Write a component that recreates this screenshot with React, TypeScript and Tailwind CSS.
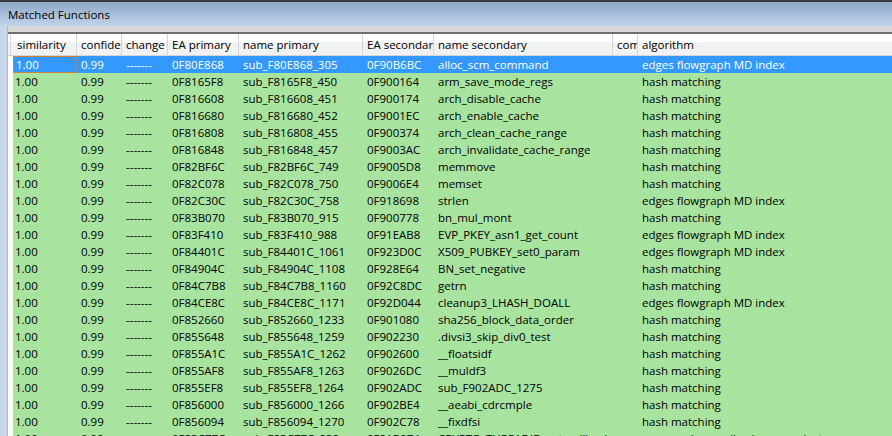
import React from 'react';

type Row = [string, string, string, string, string];

const rows: Row[] = [
  ['0F80E868', 'sub_F80E868_305', '0F90B6BC', 'alloc_scm_command', 'edges flowgraph MD index'],
  ['0F8165F8', 'sub_F8165F8_450', '0F900164', 'arm_save_mode_regs', 'hash matching'],
  ['0F816608', 'sub_F816608_451', '0F900174', 'arch_disable_cache', 'hash matching'],
  ['0F816680', 'sub_F816680_452', '0F9001EC', 'arch_enable_cache', 'hash matching'],
  ['0F816808', 'sub_F816808_455', '0F900374', 'arch_clean_cache_range', 'hash matching'],
  ['0F816848', 'sub_F816848_457', '0F9003AC', 'arch_invalidate_cache_range', 'hash matching'],
  ['0F82BF6C', 'sub_F82BF6C_749', '0F9005D8', 'memmove', 'hash matching'],
  ['0F82C078', 'sub_F82C078_750', '0F9006E4', 'memset', 'hash matching'],
  ['0F82C30C', 'sub_F82C30C_758', '0F918698', 'strlen', 'edges flowgraph MD index'],
  ['0F83B070', 'sub_F83B070_915', '0F900778', 'bn_mul_mont', 'hash matching'],
  ['0F83F410', 'sub_F83F410_988', '0F91EAB8', 'EVP_PKEY_asn1_get_count', 'edges flowgraph MD index'],
  ['0F84401C', 'sub_F84401C_1061', '0F923D0C', 'X509_PUBKEY_set0_param', 'edges flowgraph MD index'],
  ['0F84904C', 'sub_F84904C_1108', '0F928E64', 'BN_set_negative', 'hash matching'],
  ['0F84C7B8', 'sub_F84C7B8_1160', '0F92C8DC', 'getrn', 'hash matching'],
  ['0F84CE8C', 'sub_F84CE8C_1171', '0F92D044', 'cleanup3_LHASH_DOALL', 'edges flowgraph MD index'],
  ['0F852660', 'sub_F852660_1233', '0F901080', 'sha256_block_data_order', 'hash matching'],
  ['0F855648', 'sub_F855648_1259', '0F902230', '.divsi3_skip_div0_test', 'hash matching'],
  ['0F855A1C', 'sub_F855A1C_1262', '0F902600', '__floatsidf', 'hash matching'],
  ['0F855AF8', 'sub_F855AF8_1263', '0F9026DC', '__muldf3', 'hash matching'],
  ['0F855EF8', 'sub_F855EF8_1264', '0F902ADC', 'sub_F902ADC_1275', 'hash matching'],
  ['0F856000', 'sub_F856000_1266', '0F902BE4', '__aeabi_cdrcmple', 'hash matching'],
  ['0F856094', 'sub_F856094_1270', '0F902C78', '__fixdfsi', 'hash matching'],
  ['0F83C77C', 'sub_F83C77C_838', '0F91B074', 'CRYPTO_THREADID_set_callback', 'mnemonics small-primes-product'],
];

const headers = [
  { label: 'similarity', w: 'w-[66px]' },
  { label: 'confidence', w: 'w-[45px]' },
  { label: 'change', w: 'w-[46px]' },
  { label: 'EA primary', w: 'w-[71px]' },
  { label: 'name primary', w: 'w-[124px]' },
  { label: 'EA secondary', w: 'w-[71px]' },
  { label: 'name secondary', w: 'w-[179px]' },
  { label: 'comments ported', w: 'w-[25px]' },
];

const cell = 'shrink-0 overflow-hidden whitespace-nowrap pl-[4px]';

export default function App() {
  return (
    <div
      className="w-[892px] h-[436px] overflow-hidden flex flex-col bg-[#c6d5e8] text-[11.5px] leading-[17px] text-black"
      style={{ fontFamily: '"Open Sans", "Noto Sans", sans-serif' }}
    >
      {/* window top edge + title */}
      <div className="h-[2px] bg-[#3a3d42]" />
      <div className="h-[24px] flex items-center pl-[8px] bg-gradient-to-b from-[#8ea7c6] to-[#c1d4ea]">
        Matched Functions
      </div>

      <div className="flex flex-1 min-h-0">
        {/* left window frame */}
        <div className="w-[8px] shrink-0 bg-[#c6d5e8] border-r border-[#a9b9cc]" />

        <div className="flex-1 min-w-0 flex flex-col bg-white">
          <div className="h-[8px] shrink-0 bg-[#d8d8d8] border-b-2 border-[#6f6f6f]" />

          {/* header */}
          <div className="h-[22px] shrink-0 flex bg-gradient-to-b from-white from-40% to-[#f1f2f4] to-40% border-b border-[#d5d5d5]">
            <div className="w-[3px] shrink-0 border-r border-[#d5d5d5]" />
            {headers.map((h) => (
              <div
                key={h.label}
                className={`${h.w} ${cell} flex items-center border-r border-[#d5d5d5] ${h.label === 'similarity' ? 'pl-[6px]' : ''}`}
              >
                {h.label}
              </div>
            ))}
            <div className={`${cell} flex-1 flex items-center`}>algorithm</div>
          </div>

          {/* rows */}
          <div className="flex flex-col">
            {rows.map((r, i) => {
              const sel = i === 0;
              return (
                <div key={r[1]} className="h-[17px] shrink-0 flex bg-white">
                  <div className="w-[5px] shrink-0" />
                  <div className={`flex flex-1 ${sel ? 'bg-[#3399ff] text-white' : 'bg-[#a8e4a0]'}`}>
                    <div
                      className={`w-[64px] shrink-0 overflow-hidden whitespace-nowrap pl-[2px] ${sel ? 'border border-dotted border-[#d38b47] leading-[15px]' : ''}`}
                    >
                      1.00
                    </div>
                    <div className={`w-[45px] ${cell}`}>0.99</div>
                    <div className={`w-[46px] ${cell}`}>-------</div>
                    <div className={`w-[71px] ${cell}`}>{r[0]}</div>
                    <div className={`w-[124px] ${cell}`}>{r[1]}</div>
                    <div className={`w-[71px] ${cell}`}>{r[2]}</div>
                    <div className={`w-[179px] ${cell}`}>{r[3]}</div>
                    <div className={`w-[25px] ${cell}`} />
                    <div className={`flex-1 ${cell}`}>{r[4]}</div>
                  </div>
                </div>
              );
            })}
          </div>
        </div>
      </div>
    </div>
  );
}
